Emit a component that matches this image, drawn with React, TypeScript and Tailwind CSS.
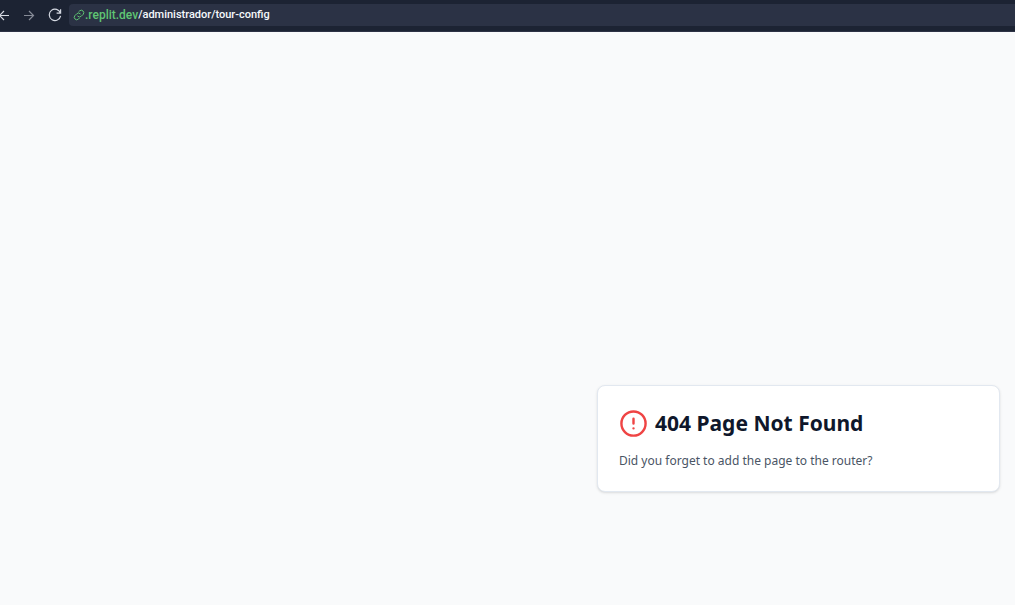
import { useState } from 'react';

function BackIcon() {
  return (
    <svg viewBox="0 0 12 12" className="h-3 w-3" fill="none" stroke="currentColor" strokeWidth="1.2" aria-hidden="true">
      <path d="M11 6.5H2M6 2L1.5 6.5L6 11" />
    </svg>
  );
}

function ForwardIcon() {
  return (
    <svg viewBox="0 0 12 12" className="h-3 w-3" fill="none" stroke="currentColor" strokeWidth="1.2" aria-hidden="true">
      <path d="M1 6.5h9M6 2L10.5 6.5L6 11" />
    </svg>
  );
}

function ReloadIcon() {
  return (
    <svg viewBox="0 0 14 14" className="h-3.5 w-3.5" fill="none" stroke="currentColor" strokeWidth="1.2" aria-hidden="true">
      <path d="M12.4 5A5.700 5.700 0 1 0 12.600 7.800M12.600 1.2v4H8.6" />
    </svg>
  );
}

function LinkIcon() {
  return (
    <svg viewBox="0 0 24 24" className="h-3 w-3 shrink-0" fill="none" stroke="currentColor" strokeWidth="2" strokeLinecap="round" aria-hidden="true">
      <path d="M9.5 14.5a5 5 0 0 0 7 0l4-4a5 5 0 0 0-7-7L11.500 5.500" />
      <path d="M14.500 9.500a5 5 0 0 0-7 0l-4 4a5 5 0 0 0 7 7l2-2" />
    </svg>
  );
}

function BrowserBar() {
  const [path, setPath] = useState('/administrador/tour-config');
  return (
    <header className="flex h-8 shrink-0 items-center border-b border-[#2d3245] bg-[#1c2333] pb-px font-['Roboto','Liberation_Sans',sans-serif] text-[11px] font-medium">
      <nav aria-label="History" className="-ml-0.5 flex w-[71px] items-center gap-[13px] text-[#d5d9e2]">
        <button type="button" aria-label="Back"><BackIcon /></button>
        <button type="button" aria-label="Forward" className="text-[#868b97]"><ForwardIcon /></button>
        <button type="button" aria-label="Reload"><ReloadIcon /></button>
      </nav>
      <div className="flex h-[22px] min-w-0 flex-1 items-center rounded-l bg-[#2b3245] pl-1">
        <label htmlFor="path" className="flex items-center text-xs text-[#5fc573]">
          <LinkIcon />
          <span>.replit.dev</span>
        </label>
        <input
          id="path"
          value={path}
          onChange={(e) => setPath(e.target.value)}
          className="min-w-0 flex-1 bg-transparent text-[#f5f9fc] outline-none"
        />
      </div>
    </header>
  );
}

function AlertIcon() {
  return (
    <svg viewBox="0 0 24 24" className="h-[29px] w-[29px] text-[#ef4444]" fill="none" stroke="currentColor" strokeWidth="2" strokeLinecap="round" strokeLinejoin="round" aria-hidden="true">
      <circle cx="12" cy="12" r="10" />
      <path d="M12 8v4M12 16h.01" />
    </svg>
  );
}

export default function App() {
  return (
    <div className="flex min-h-screen flex-col bg-[#f9fafb]">
      <BrowserBar />
      <main className="flex flex-1 flex-col items-end justify-end px-[15px] pb-[113px] font-['Noto_Sans',sans-serif]">
        <section className="w-full max-w-[403px] rounded-lg border border-slate-200 bg-white px-[21px] py-[21px] shadow-sm">
          <div className="flex items-center gap-[7px]">
            <AlertIcon />
            <h1 className="text-[21px] leading-8 font-bold text-slate-900">404 Page Not Found</h1>
          </div>
          <p className="mt-3 text-xs leading-[19px] text-gray-600">Did you forget to add the page to the router?</p>
        </section>
      </main>
    </div>
  );
}
